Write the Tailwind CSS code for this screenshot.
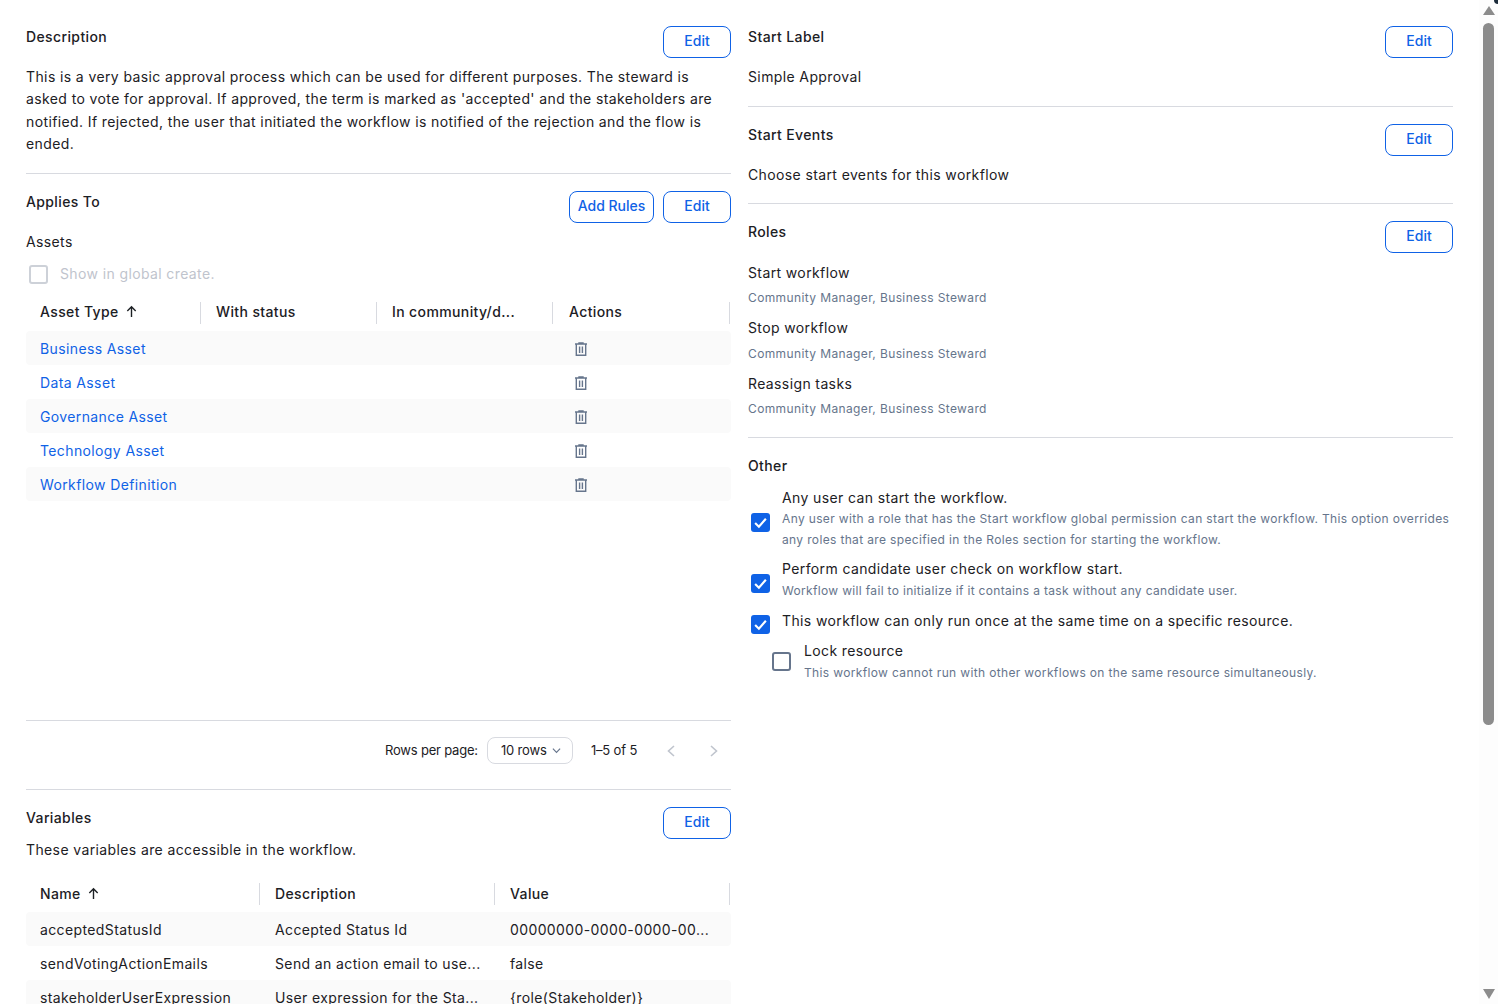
<!DOCTYPE html>
<html lang="en">

<head>
    <meta charset="UTF-8" />
    <title>Workflow Definition</title>
    <script src="https://cdn.jsdelivr.net/npm/@tailwindcss/browser@4"></script>
</head>

<body class="bg-white h-[1004px] overflow-hidden font-['Inter',sans-serif] text-[14px] tracking-[0.38px] text-[#1c2024]">
    <div class="flex h-[1004px] relative">
        <main class="w-[1479px] flex gap-[17px] pl-[26px] pr-[26px] overflow-hidden">

            <!-- Left column -->
            <section class="w-[705px] shrink-0">
                <!-- Description -->
                <div class="flex justify-between items-start pt-[26px] h-[58px]">
                    <h3 class="font-medium leading-[22px]">Description</h3>
                    <button class="w-[68px] h-[32px] pb-[3px] border border-[#0f62e6] rounded-[8px] text-[#0f62e6] font-medium tracking-[0px]">Edit</button>
                </div>
                <p class="mt-[8px] leading-[22.4px] tracking-[0.39px] h-[108px] pr-[10px] border-b border-[#d8dae0]">This is a very basic approval process which can be used for different purposes. The steward is asked to vote for approval. If approved, the term is marked as 'accepted' and the stakeholders are notified. If rejected, the user that initiated the workflow is notified of the rejection and the flow is ended.</p>

                <!-- Applies To -->
                <div class="flex justify-between items-start pt-[17px] h-[49px]">
                    <h3 class="font-medium leading-[22px]">Applies To</h3>
                    <div class="flex gap-[9px]">
                        <button class="w-[85px] h-[32px] pb-[3px] border border-[#0f62e6] rounded-[8px] text-[#0f62e6] font-medium tracking-[0px]">Add Rules</button>
                        <button class="w-[68px] h-[32px] pb-[3px] border border-[#0f62e6] rounded-[8px] text-[#0f62e6] font-medium tracking-[0px]">Edit</button>
                    </div>
                </div>
                <p class="mt-[8px] leading-[22px]">Assets</p>
                <div class="mt-[9px] flex items-center h-[22px] text-[#bfc4cd]">
                    <span class="ml-[3px] mt-[2px] w-[19px] h-[19px] border-2 border-[#cdd1d8] rounded-[3px]"></span>
                    <span class="ml-[12px]">Show in global create.</span>
                </div>

                <!-- Assets table -->
                <div class="mt-[12px] grid grid-cols-[175px_176px_176px_178px] h-[34px] items-center font-medium">
                    <div class="pl-[14px] pb-[3px] h-[22px] flex items-center gap-[6px] border-r border-[#d8dae0]">Asset Type
                        <svg class="w-[13px] h-[13px]" viewBox="0 0 14 14" fill="none" stroke="#1c2024" stroke-width="1.5"><path d="M7 13V2M2.5 6.5 7 2l4.5 4.5" /></svg>
                    </div>
                    <div class="pl-[15px] pb-[3px] h-[22px] flex items-center border-r border-[#d8dae0]">With status</div>
                    <div class="pl-[15px] pb-[3px] h-[22px] flex items-center border-r border-[#d8dae0]">In community/d...</div>
                    <div class="pl-[16px] pb-[3px] h-[22px] flex items-center border-r border-[#d8dae0] mr-px">Actions</div>
                </div>
                <div class="h-[340px] mt-[1px]">
                    <div class="flex items-center h-[34px] bg-[#fafafa] rounded-[4px]">
                        <a class="pl-[14px] w-[534px] text-[#0f62e6]">Business Asset</a>
                        <svg class="ml-[14px] mt-px w-[14px] h-[14px]" viewBox="0 0 14 14" fill="none" stroke="#66758c" stroke-width="1.4"><path d="M1 2h12M5 2V1h4v1M2.3 2v11.3h9.4V2M5.6 4.5v6.5M8.4 4.5v6.5" /></svg>
                    </div>
                    <div class="flex items-center h-[34px] rounded-[4px]">
                        <a class="pl-[14px] w-[534px] text-[#0f62e6]">Data Asset</a>
                        <svg class="ml-[14px] mt-px w-[14px] h-[14px]" viewBox="0 0 14 14" fill="none" stroke="#66758c" stroke-width="1.4"><path d="M1 2h12M5 2V1h4v1M2.3 2v11.3h9.4V2M5.6 4.5v6.5M8.4 4.5v6.5" /></svg>
                    </div>
                    <div class="flex items-center h-[34px] bg-[#fafafa] rounded-[4px]">
                        <a class="pl-[14px] w-[534px] text-[#0f62e6]">Governance Asset</a>
                        <svg class="ml-[14px] mt-px w-[14px] h-[14px]" viewBox="0 0 14 14" fill="none" stroke="#66758c" stroke-width="1.4"><path d="M1 2h12M5 2V1h4v1M2.3 2v11.3h9.4V2M5.6 4.5v6.5M8.4 4.5v6.5" /></svg>
                    </div>
                    <div class="flex items-center h-[34px] rounded-[4px]">
                        <a class="pl-[14px] w-[534px] text-[#0f62e6]">Technology Asset</a>
                        <svg class="ml-[14px] mt-px w-[14px] h-[14px]" viewBox="0 0 14 14" fill="none" stroke="#66758c" stroke-width="1.4"><path d="M1 2h12M5 2V1h4v1M2.3 2v11.3h9.4V2M5.6 4.5v6.5M8.4 4.5v6.5" /></svg>
                    </div>
                    <div class="flex items-center h-[34px] bg-[#fafafa] rounded-[4px]">
                        <a class="pl-[14px] w-[534px] text-[#0f62e6]">Workflow Definition</a>
                        <svg class="ml-[14px] mt-px w-[14px] h-[14px]" viewBox="0 0 14 14" fill="none" stroke="#66758c" stroke-width="1.4"><path d="M1 2h12M5 2V1h4v1M2.3 2v11.3h9.4V2M5.6 4.5v6.5M8.4 4.5v6.5" /></svg>
                    </div>
                </div>

                <!-- Pagination -->
                <div class="mt-[49px] border-t border-b border-[#d8dae0] h-[70px] pb-[9px] flex items-center text-[13px] tracking-[-0.15px]">
                    <span class="ml-[359px] tracking-[-0.2px]">Rows per page:</span>
                    <div class="ml-[9px] w-[86px] h-[27px] border border-[#d8dae0] rounded-[8px] flex items-center pl-[13px] gap-[5px]">10 rows
                        <svg class="w-[9px] h-[9px]" viewBox="0 0 10 10" fill="none" stroke="#66758c" stroke-width="1.3"><path d="M1 3l4 4 4-4" /></svg>
                    </div>
                    <span class="ml-[18px]">1–5 of 5</span>
                    <svg class="ml-[29px] w-[10px] h-[12px]" viewBox="0 0 10 12" fill="none" stroke="#bfc4cd" stroke-width="1.6"><path d="M8 1 2.5 6 8 11" /></svg>
                    <svg class="ml-[33px] w-[10px] h-[12px]" viewBox="0 0 10 12" fill="none" stroke="#bfc4cd" stroke-width="1.6"><path d="M2 1l5.5 5L2 11" /></svg>
                </div>

                <!-- Variables -->
                <div class="flex justify-between items-start pt-[17px] h-[49px]">
                    <h3 class="font-medium leading-[22px]">Variables</h3>
                    <button class="w-[68px] h-[32px] pb-[3px] border border-[#0f62e6] rounded-[8px] text-[#0f62e6] font-medium tracking-[0px]">Edit</button>
                </div>
                <p class="leading-[22px]">These variables are accessible in the workflow.</p>
                <div class="mt-[16px] grid grid-cols-[234px_235px_236px] h-[34px] items-center font-medium">
                    <div class="pl-[14px] pb-[2px] h-[22px] flex items-center gap-[6px] border-r border-[#d8dae0]">Name
                        <svg class="w-[13px] h-[13px]" viewBox="0 0 14 14" fill="none" stroke="#1c2024" stroke-width="1.5"><path d="M7 13V2M2.5 6.5 7 2l4.5 4.5" /></svg>
                    </div>
                    <div class="pl-[15px] pb-[2px] h-[22px] flex items-center border-r border-[#d8dae0]">Description</div>
                    <div class="pl-[15px] pb-[2px] h-[22px] flex items-center border-r border-[#d8dae0] mr-px">Value</div>
                </div>
                <div class="grid grid-cols-[235px_235px_235px] items-center h-[34px] bg-[#fafafa] rounded-[4px] mt-[1px]">
                    <div class="pl-[14px]">acceptedStatusId</div>
                    <div class="pl-[14px]">Accepted Status Id</div>
                    <div class="pl-[14px]">00000000-0000-0000-00...</div>
                </div>
                <div class="grid grid-cols-[235px_235px_235px] items-center h-[34px] rounded-[4px]">
                    <div class="pl-[14px]">sendVotingActionEmails</div>
                    <div class="pl-[14px]">Send an action email to use...</div>
                    <div class="pl-[14px]">false</div>
                </div>
                <div class="grid grid-cols-[235px_235px_235px] items-center h-[34px] bg-[#fafafa] rounded-[4px]">
                    <div class="pl-[14px]">stakeholderUserExpression</div>
                    <div class="pl-[14px]">User expression for the Sta...</div>
                    <div class="pl-[14px]">{role(Stakeholder)}</div>
                </div>
            </section>

            <!-- Right column -->
            <section class="w-[705px] shrink-0">
                <div class="flex justify-between items-start pt-[26px] h-[58px]">
                    <h3 class="font-medium leading-[22px]">Start Label</h3>
                    <button class="w-[68px] h-[32px] pb-[3px] border border-[#0f62e6] rounded-[8px] text-[#0f62e6] font-medium tracking-[0px]">Edit</button>
                </div>
                <p class="mt-[8px] leading-[22px] h-[41px] border-b border-[#d8dae0]">Simple Approval</p>

                <div class="flex justify-between items-start pt-[17px] h-[49px]">
                    <h3 class="font-medium leading-[22px]">Start Events</h3>
                    <button class="w-[68px] h-[32px] pb-[3px] border border-[#0f62e6] rounded-[8px] text-[#0f62e6] font-medium tracking-[0px]">Edit</button>
                </div>
                <p class="mt-[8px] leading-[22px] h-[40px] border-b border-[#d8dae0]">Choose start events for this workflow</p>

                <div class="flex justify-between items-start pt-[17px] h-[49px]">
                    <h3 class="font-medium leading-[22px]">Roles</h3>
                    <button class="w-[68px] h-[32px] pb-[3px] border border-[#0f62e6] rounded-[8px] text-[#0f62e6] font-medium tracking-[0px]">Edit</button>
                </div>
                <div class="border-b border-[#d8dae0] h-[185px] pt-[9px]">
                    <p class="leading-[22px]">Start workflow</p>
                    <p class="mt-[4px] leading-[20px] text-[12px] text-[#66758c]">Community Manager, Business Steward</p>
                    <p class="mt-[9px] leading-[22px]">Stop workflow</p>
                    <p class="mt-[5px] leading-[20px] text-[12px] text-[#66758c]">Community Manager, Business Steward</p>
                    <p class="mt-[9px] leading-[22px]">Reassign tasks</p>
                    <p class="mt-[4px] leading-[20px] text-[12px] text-[#66758c]">Community Manager, Business Steward</p>
                </div>

                <h3 class="mt-[17px] font-medium leading-[22px]">Other</h3>

                <div class="mt-[10px] flex items-start gap-[12px] pl-[3px]">
                    <span class="mt-[26px] w-[19px] h-[19px] rounded-[3px] bg-[#0f62e6] flex items-center justify-center shrink-0">
                        <svg class="w-[15px] h-[15px]" viewBox="0 0 14 14" fill="none" stroke="#fff" stroke-width="2"><path d="M2 7.5 5.5 11 12 3.5" /></svg>
                    </span>
                    <div>
                        <p class="leading-[22px]">Any user can start the workflow.</p>
                        <p class="leading-[20.5px] text-[12px] tracking-[0.35px] text-[#66758c]">Any user with a role that has the Start workflow global permission can start the workflow. This option overrides any roles that are specified in the Roles section for starting the workflow.</p>
                    </div>
                </div>

                <div class="mt-[8px] flex items-start gap-[12px] pl-[3px]">
                    <span class="mt-[16px] w-[19px] h-[19px] rounded-[3px] bg-[#0f62e6] flex items-center justify-center shrink-0">
                        <svg class="w-[15px] h-[15px]" viewBox="0 0 14 14" fill="none" stroke="#fff" stroke-width="2"><path d="M2 7.5 5.5 11 12 3.5" /></svg>
                    </span>
                    <div>
                        <p class="leading-[22px]">Perform candidate user check on workflow start.</p>
                        <p class="mt-px leading-[20px] text-[12px] tracking-[0.33px] text-[#66758c]">Workflow will fail to initialize if it contains a task without any candidate user.</p>
                    </div>
                </div>

                <div class="mt-[9px] flex items-start gap-[12px] pl-[3px] h-[22px]">
                    <span class="mt-[5px] w-[19px] h-[19px] rounded-[3px] bg-[#0f62e6] flex items-center justify-center shrink-0">
                        <svg class="w-[15px] h-[15px]" viewBox="0 0 14 14" fill="none" stroke="#fff" stroke-width="2"><path d="M2 7.5 5.5 11 12 3.5" /></svg>
                    </span>
                    <p class="leading-[22px]">This workflow can only run once at the same time on a specific resource.</p>
                </div>

                <div class="mt-[8px] flex items-start gap-[13px] pl-[24px]">
                    <span class="mt-[12px] w-[19px] h-[19px] rounded-[3px] border-2 border-[#66758c] shrink-0"></span>
                    <div>
                        <p class="leading-[22px]">Lock resource</p>
                        <p class="mt-px leading-[20px] text-[12px] tracking-[0.35px] text-[#66758c]">This workflow cannot run with other workflows on the same resource simultaneously.</p>
                    </div>
                </div>
            </section>
        </main>

        <!-- Scrollbar -->
        <div class="w-[19px] h-[1004px] bg-[#fdfdfd] flex flex-col items-center">
            <span class="mt-[6px] w-0 h-0 border-l-[6px] border-r-[6px] border-b-[9px] border-l-transparent border-r-transparent border-b-[#8c8c8c]"></span>
            <span class="mt-[8px] w-[11px] h-[702px] rounded-full bg-[#8c8c8c]"></span>
            <span class="mt-auto mb-[5px] w-0 h-0 border-l-[6px] border-r-[6px] border-t-[10px] border-l-transparent border-r-transparent border-t-[#8c8c8c]"></span>
        </div>
        <span class="absolute top-0 right-0 w-[4px] h-[4px] bg-[#1c2b3a] rounded-bl-[4px]"></span>
    </div>
</body>

</html>
